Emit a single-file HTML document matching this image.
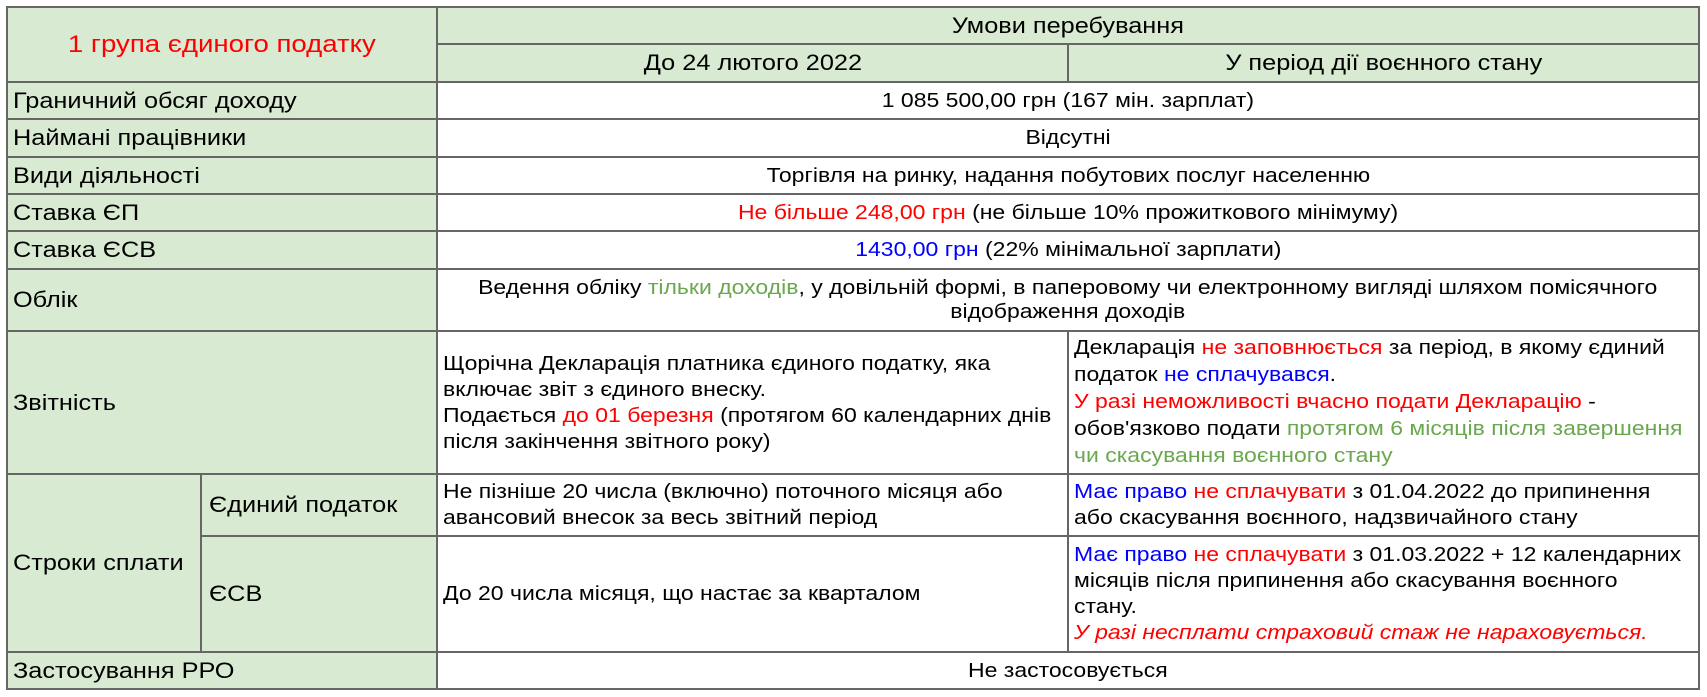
<!DOCTYPE html>
<html><head><meta charset="utf-8"><style>
html,body{margin:0;padding:0;background:#fff;width:1707px;height:697px;overflow:hidden}
table{position:absolute;left:6px;top:6px;border-collapse:collapse;table-layout:fixed;font-family:"Liberation Sans",Arial,sans-serif;font-size:20px;color:#000;line-height:26px}
td{border:2px solid #666;padding:0 0 0 5px;vertical-align:middle;white-space:nowrap}
.g{background:#d9ead3;font-size:22px;padding-left:5px}
.c{text-align:center;padding:0}
.r{color:#ff0000}.b{color:#0000ff}.gr{color:#6aa84f}
.i{font-style:italic}
.s{display:inline-block;transform:scaleX(1.15);transform-origin:left center}
.c .s{transform-origin:center center}
</style></head><body>
<table>
<colgroup><col style="width:194px"><col style="width:236px"><col style="width:631px"><col style="width:631px"></colgroup>
<tr style="height:37px"><td class="g c r" colspan="2" rowspan="2" style="font-size:24px"><span class="s">1 група єдиного податку</span></td><td class="g c" colspan="2"><span class="s">Умови перебування</span></td></tr>
<tr style="height:38px"><td class="g c"><span class="s">До 24 лютого 2022</span></td><td class="g c"><span class="s">У період дії воєнного стану</span></td></tr>
<tr style="height:37px"><td class="g" colspan="2"><span class="s">Граничний обсяг доходу</span></td><td class="c" colspan="2"><span class="s">1 085 500,00 грн (167 мін. зарплат)</span></td></tr>
<tr style="height:38px"><td class="g" colspan="2"><span class="s">Наймані працівники</span></td><td class="c" colspan="2"><span class="s">Відсутні</span></td></tr>
<tr style="height:37px"><td class="g" colspan="2"><span class="s">Види діяльності</span></td><td class="c" colspan="2"><span class="s">Торгівля на ринку, надання побутових послуг населенню</span></td></tr>
<tr style="height:37px"><td class="g" colspan="2"><span class="s">Ставка ЄП</span></td><td class="c" colspan="2"><span class="s"><span class="r">Не більше 248,00 грн</span> (не більше 10% прожиткового мінімуму)</span></td></tr>
<tr style="height:38px"><td class="g" colspan="2"><span class="s">Ставка ЄСВ</span></td><td class="c" colspan="2"><span class="s"><span class="b">1430,00 грн</span> (22% мінімальної зарплати)</span></td></tr>
<tr style="height:62px"><td class="g" colspan="2"><span class="s">Облік</span></td><td class="c" colspan="2" style="line-height:24px"><span class="s">Ведення обліку <span class="gr">тільки доходів</span>, у довільній формі, в паперовому чи електронному вигляді шляхом помісячного<br>відображення доходів</span></td></tr>
<tr style="height:143px"><td class="g" colspan="2"><span class="s">Звітність</span></td><td><span class="s">Щорічна Декларація платника єдиного податку, яка<br>включає звіт з єдиного внеску.<br>Подається <span class="r">до 01 березня</span> (протягом 60 календарних днів<br>після закінчення звітного року)</span></td><td style="line-height:27px"><span class="s">Декларація <span class="r">не заповнюється</span> за період, в якому єдиний<br>податок <span class="b">не сплачувався</span>.<br><span class="r">У разі неможливості вчасно подати Декларацію</span> -<br>обов'язково подати <span class="gr">протягом 6 місяців після завершення</span><br><span class="gr">чи скасування воєнного стану</span></span></td></tr>
<tr style="height:62px"><td class="g" rowspan="2"><span class="s">Строки сплати</span></td><td class="g" style="padding-left:7px"><span class="s">Єдиний податок</span></td><td><span class="s">Не пізніше 20 числа (включно) поточного місяця або<br>авансовий внесок за весь звітний період</span></td><td><span class="s"><span class="b">Має право</span> <span class="r">не сплачувати</span> з 01.04.2022 до припинення<br>або скасування воєнного, надзвичайного стану</span></td></tr>
<tr style="height:116px"><td class="g" style="padding-left:7px"><span class="s">ЄСВ</span></td><td><span class="s">До 20 числа місяця, що настає за кварталом</span></td><td><span class="s"><span class="b">Має право</span> <span class="r">не сплачувати</span> з 01.03.2022 + 12 календарних<br>місяців після припинення або скасування воєнного<br>стану.<br><span class="r i">У разі несплати страховий стаж не нараховується.</span></span></td></tr>
<tr style="height:37px"><td class="g" colspan="2"><span class="s">Застосування РРО</span></td><td class="c" colspan="2"><span class="s">Не застосовується</span></td></tr>
</table>
</body></html>
